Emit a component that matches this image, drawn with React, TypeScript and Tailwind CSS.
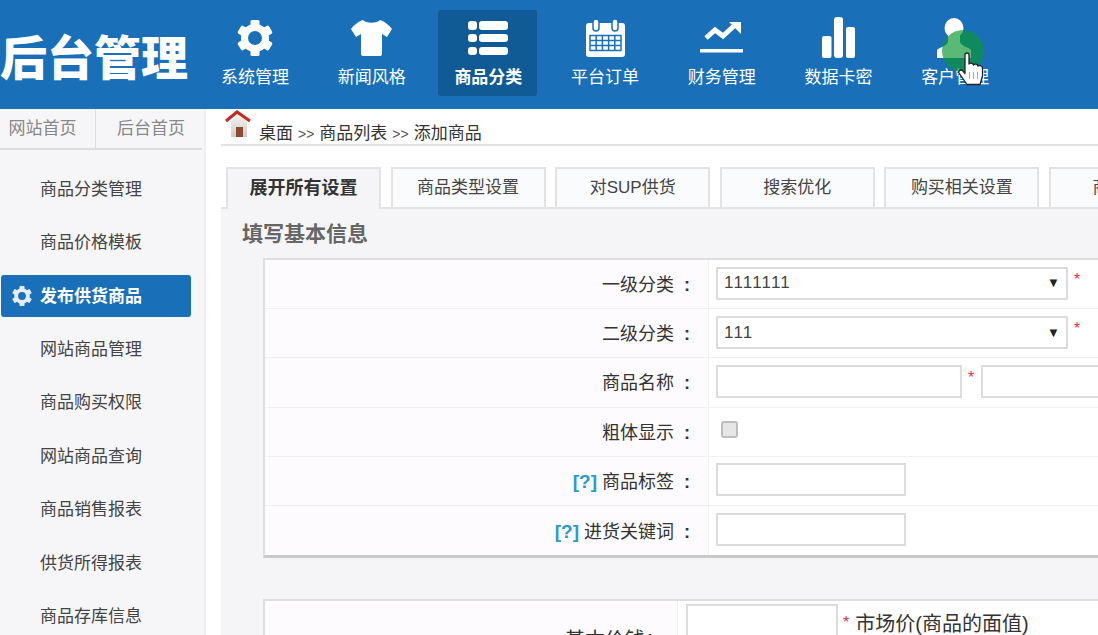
import type { ReactNode } from "react";

const font = "[font-family:'Liberation_Sans','Noto_Sans_CJK_SC',sans-serif]";

function GearIcon({ size = 36, color = "white" }: { size?: number; color?: string }) {
  return (
    <svg width={size} height={size} viewBox="0 0 36 36" fill={color}>
      {[0, 60, 120, 180, 240, 300].map((deg) => (
        <rect key={deg} x="13.5" y="0" width="9" height="9" rx="1.5" transform={`rotate(${deg} 18 18)`} />
      ))}
      <circle cx="18" cy="18" r="10.5" fill="none" stroke={color} strokeWidth="7" />
    </svg>
  );
}

function ShirtIcon() {
  return (
    <svg width="41" height="36" viewBox="0 0 41 36" fill="white">
      <path d="M12 0 C15 3.5 26 3.5 29 0 C33 1 38 5 41 9 L36 17 L31 14 V34 Q31 36 29 36 H12 Q10 36 10 34 V14 L5 17 L0 9 C3 5 8 1 12 0 Z" />
    </svg>
  );
}

function ListIcon() {
  return (
    <svg width="40" height="34" viewBox="0 0 40 34" fill="white">
      <rect x="0" y="0" width="9" height="9" rx="3" />
      <rect x="0" y="13" width="9" height="8" rx="3" />
      <rect x="0" y="26" width="9" height="8" rx="3" />
      <rect x="11" y="0" width="29" height="9" rx="3" />
      <rect x="11" y="13" width="29" height="8" rx="3" />
      <rect x="11" y="26" width="29" height="8" rx="3" />
    </svg>
  );
}

function CalendarIcon() {
  return (
    <svg width="39" height="39" viewBox="0 0 39 39">
      <rect x="0" y="5" width="39" height="34" rx="3" fill="white" />
      <rect x="7" y="1" width="6" height="12" rx="3" fill="white" stroke="#1a70b8" strokeWidth="1.5" />
      <rect x="26" y="1" width="6" height="12" rx="3" fill="white" stroke="#1a70b8" strokeWidth="1.5" />
      <path
        d="M4 17.5 H35 M4 22.5 H35 M4 27.5 H35 M4 32.5 H35 M4 17 V33 M10.2 17 V33 M16.4 17 V33 M22.6 17 V33 M28.8 17 V33 M35 17 V33"
        stroke="#1a70b8"
        strokeWidth="1.5"
        fill="none"
      />
    </svg>
  );
}

function TrendIcon() {
  return (
    <svg width="44" height="32" viewBox="0 0 44 32" fill="none">
      <path d="M6 16 L15 8 L23 14 L35 3" stroke="white" strokeWidth="5" />
      <path d="M29 0 H41 V12 Z" fill="white" />
      <rect x="0" y="27" width="43" height="3.5" fill="white" />
    </svg>
  );
}

function BarsIcon() {
  return (
    <svg width="33" height="41" viewBox="0 0 33 41" fill="white">
      <rect x="0" y="19" width="9.5" height="22" rx="2" />
      <rect x="12" y="0" width="9" height="41" rx="3" />
      <rect x="24" y="10" width="9" height="31" rx="2" />
    </svg>
  );
}

function UserIcon() {
  return (
    <svg width="36" height="40" viewBox="0 0 36 40" fill="white">
      <ellipse cx="17" cy="10" rx="9.5" ry="10" />
      <path d="M11 17 H23 V24 C24 28 31 29 34 32 V40 H0 V32 C3 29 10 28 11 24 Z" />
    </svg>
  );
}

function HandCursor() {
  return (
    <svg width="27" height="34" viewBox="0 0 27 34">
      <path
        d="M7 2.5 C7 0.5 11 0.5 11 2.5 V12 C12 10.5 15 11 15.5 13 C16.5 11.5 19.5 12 20 14 C21 13 24.5 13.5 24.5 16.5 V24 L22 32.5 H9 L1 21 C0 18.5 3 17 5 19 L7 21.5 Z"
        fill="white"
        stroke="#222"
        strokeWidth="1.3"
        strokeLinejoin="round"
      />
      <path d="M11.5 20 V27 M15.5 20 V27 M19.5 20 V27" stroke="#aaa" strokeWidth="1" />
    </svg>
  );
}

function HomeIcon() {
  return (
    <svg width="28" height="28" viewBox="0 0 28 28" className="self-start">
      <defs>
        <linearGradient id="wall" x1="0" y1="0" x2="0" y2="1">
          <stop offset="0" stopColor="#f5f1ea" />
          <stop offset="1" stopColor="#cfccc8" />
        </linearGradient>
      </defs>
      <path d="M7 12 L14 6 L23 12 V28 H7 Z" fill="url(#wall)" />
      <rect x="12" y="18" width="7" height="10" fill="#8a4a32" />
      <path d="M2 12 L13 3 L26 12" fill="none" stroke="#c52a25" strokeWidth="3" />
    </svg>
  );
}

const navItems: { label: string; icon: ReactNode; active?: boolean }[] = [
  { label: "系统管理", icon: <GearIcon /> },
  { label: "新闻风格", icon: <ShirtIcon /> },
  { label: "商品分类", icon: <ListIcon />, active: true },
  { label: "平台订单", icon: <CalendarIcon /> },
  { label: "财务管理", icon: <TrendIcon /> },
  { label: "数据卡密", icon: <BarsIcon /> },
  { label: "客户管理", icon: <UserIcon /> },
];

const sideItems = [
  "商品分类管理",
  "商品价格模板",
  "发布供货商品",
  "网站商品管理",
  "商品购买权限",
  "网站商品查询",
  "商品销售报表",
  "供货所得报表",
  "商品存库信息",
];

const tabs = ["展开所有设置", "商品类型设置", "对SUP供货", "搜索优化", "购买相关设置", "商品描述"];

function Star({ className = "-mt-[6px]" }: { className?: string }) {
  return <span className={`text-[16px] leading-none text-[#e8324a] ${className}`}>*</span>;
}

function Select({ value }: { value: string }) {
  return (
    <div className="flex h-[33px] w-[352px] items-center justify-between border-2 border-[#dcdcdc] bg-white pl-[6px] pr-[5px] text-[17px] tracking-[1.2px] text-[#444]">
      <span>{value}</span>
      <span className="text-[13px] text-[#222]">▼</span>
    </div>
  );
}

function Input({ className = "w-[190px]" }: { className?: string }) {
  return <div className={`h-[33px] shrink-0 border-2 border-[#dcdcdc] bg-white ${className}`} />;
}

function Row({ label, help, children, last }: { label: string; help?: boolean; children: ReactNode; last?: boolean }) {
  return (
    <div className={`flex h-[49.2px] ${last ? "" : "border-b border-[#f0eff1]"}`}>
      <div className="flex w-[443px] shrink-0 items-center justify-end bg-[#fdfbfd] pr-[16px] pt-[3px] text-[18px] text-[#333]">
        {help && <span className="mr-[5px] text-[19px] font-bold text-[#2a9bc9]">[?]</span>}
        <span>{label}</span>
        <span className="w-[18px] pr-[2px] text-right font-bold">:</span>
      </div>
      <div className="flex flex-1 items-center gap-[6px] border-l border-[#f0eff1] bg-white pb-[2px] pl-[7px]">
        {children}
      </div>
    </div>
  );
}

export default function App() {
  return (
    <div className={`relative flex h-[635px] w-[1098px] flex-col overflow-hidden bg-white ${font}`}>
      <header className="flex h-[109px] shrink-0 items-start bg-[#1a70b8]">
        <div className="flex h-[109px] w-[204.5px] shrink-0 items-center pt-[8px] text-[47px] font-black leading-none text-white">
          后台管理
        </div>
        <nav className="mt-[10px] flex gap-[17.7px]">
          {navItems.map((item) => (
            <div
              key={item.label}
              className={`flex h-[86px] w-[99px] flex-col items-center rounded-[3px] pl-[2px] text-[17px] text-white ${
                item.active ? "bg-[#105a95] font-bold" : ""
              }`}
            >
              <div className="flex h-[50px] items-center justify-center pt-[5px]">{item.icon}</div>
              <span className="mt-[5px] leading-[26px]">{item.label}</span>
            </div>
          ))}
        </nav>
      </header>

      <div className="flex min-h-0 flex-1">
        <aside className="w-[206px] shrink-0 border-r-2 border-[#eee] bg-[#f6f6f8]">
          <div className="mr-[2px] flex h-[41px] border-b-2 border-[#ddd] text-[17px] text-[#888]">
            <div className="flex w-[96px] items-center justify-center border-r border-[#ddd] pr-[10px]">网站首页</div>
            <div className="flex flex-1 items-center justify-center pl-[4px]">后台首页</div>
          </div>
          <ul className="flex flex-col gap-[11.4px] pt-[18.6px]">
            {sideItems.map((name, i) =>
              i === 2 ? (
                <li
                  key={name}
                  className="relative ml-[1px] flex h-[42px] w-[190px] items-center rounded-[3px] bg-[#1a70b8] pl-[39px] text-[17px] font-bold text-white"
                >
                  <span className="absolute left-[11px] top-[11px]">
                    <GearIcon size={20} color="#e4edf5" />
                  </span>
                  {name}
                </li>
              ) : (
                <li key={name} className="flex h-[42px] items-center pl-[40px] text-[17px] text-[#444]">
                  {name}
                </li>
              ),
            )}
          </ul>
        </aside>

        <main className="min-w-0 flex-1 pl-[15px]">
          <div className="flex h-[37px] w-[900px] items-end gap-[7px] border-b-2 border-[#e3e3e3] pl-[3px] text-[17px] leading-[20px] text-[#333]">
            <HomeIcon />
            <span className="flex items-center whitespace-nowrap">
              桌面<span className="mx-[5px] text-[14px] text-[#555]">&gt;&gt;</span>商品列表
              <span className="mx-[5px] text-[14px] text-[#555]">&gt;&gt;</span>添加商品
            </span>
          </div>

          <div className="relative z-10 mt-[21px] flex h-[40px] gap-[9.6px] pl-[5px]">
            {tabs.map((tab, i) => (
              <div
                key={tab}
                className={`flex w-[155px] shrink-0 items-center justify-center border-2 border-b-0 border-[#e3e3e3] ${
                  i === 0
                    ? "h-[42px] bg-[#f5f4f6] pb-[2px] text-[18px] font-bold text-[#333]"
                    : "h-[40px] bg-[#f9fbfd] text-[17px] text-[#444]"
                }`}
              >
                {tab}
              </div>
            ))}
          </div>

          <section className="h-[500px] w-[900px] border-t-2 border-[#e3e3e3] bg-[#f5f4f6] pl-[21px]">
            <h2 className="pt-[9px] text-[21px] font-bold leading-[32px] text-[#666]">填写基本信息</h2>
            <div className="ml-[21px] mt-[8px] border-2 border-b-[3px] border-r-0 border-[#dedede] border-b-[#c8c8c8]">
              <Row label="一级分类">
                <Select value="1111111" />
                <Star />
              </Row>
              <Row label="二级分类">
                <Select value="111" />
                <Star />
              </Row>
              <Row label="商品名称">
                <Input className="w-[246px]" />
                <Star />
                <Input className="ml-[1px] w-[200px] border-[#c5d5c5]" />
              </Row>
              <Row label="粗体显示">
                <div className="mb-[3px] ml-[5px] h-[17px] w-[17px] rounded-[3px] border-2 border-[#bdbdbd] bg-[#e6e6e6]" />
              </Row>
              <Row label="商品标签" help>
                <Input />
              </Row>
              <Row label="进货关键词" help last>
                <Input />
              </Row>
            </div>

            <div className="ml-[21px] mt-[41px] flex h-[80px] border-2 border-b-0 border-r-0 border-[#dedede]">
              <div className="flex w-[412px] shrink-0 items-center justify-end bg-[#fdfbfd] pr-[12px] text-[20px] text-[#333]">
                基本价钱：
              </div>
              <div className="flex flex-1 items-start gap-[5px] border-l border-[#f0eff1] bg-white pl-[8px] pt-[3px] text-[20px] leading-[28px] text-[#333]">
                <Input className="h-[40px] w-[152px]" />
                <Star className="mt-[11px]" />
                <span className="mt-[6px] pl-[1px]">市场价(商品的面值)</span>
              </div>
            </div>
          </section>
        </main>
      </div>

      <div className="absolute left-[942px] top-[30px] h-[42px] w-[42px] rounded-full bg-[rgba(10,151,51,0.67)]" />
      <div className="absolute left-[958px] top-[52px]">
        <HandCursor />
      </div>
    </div>
  );
}
